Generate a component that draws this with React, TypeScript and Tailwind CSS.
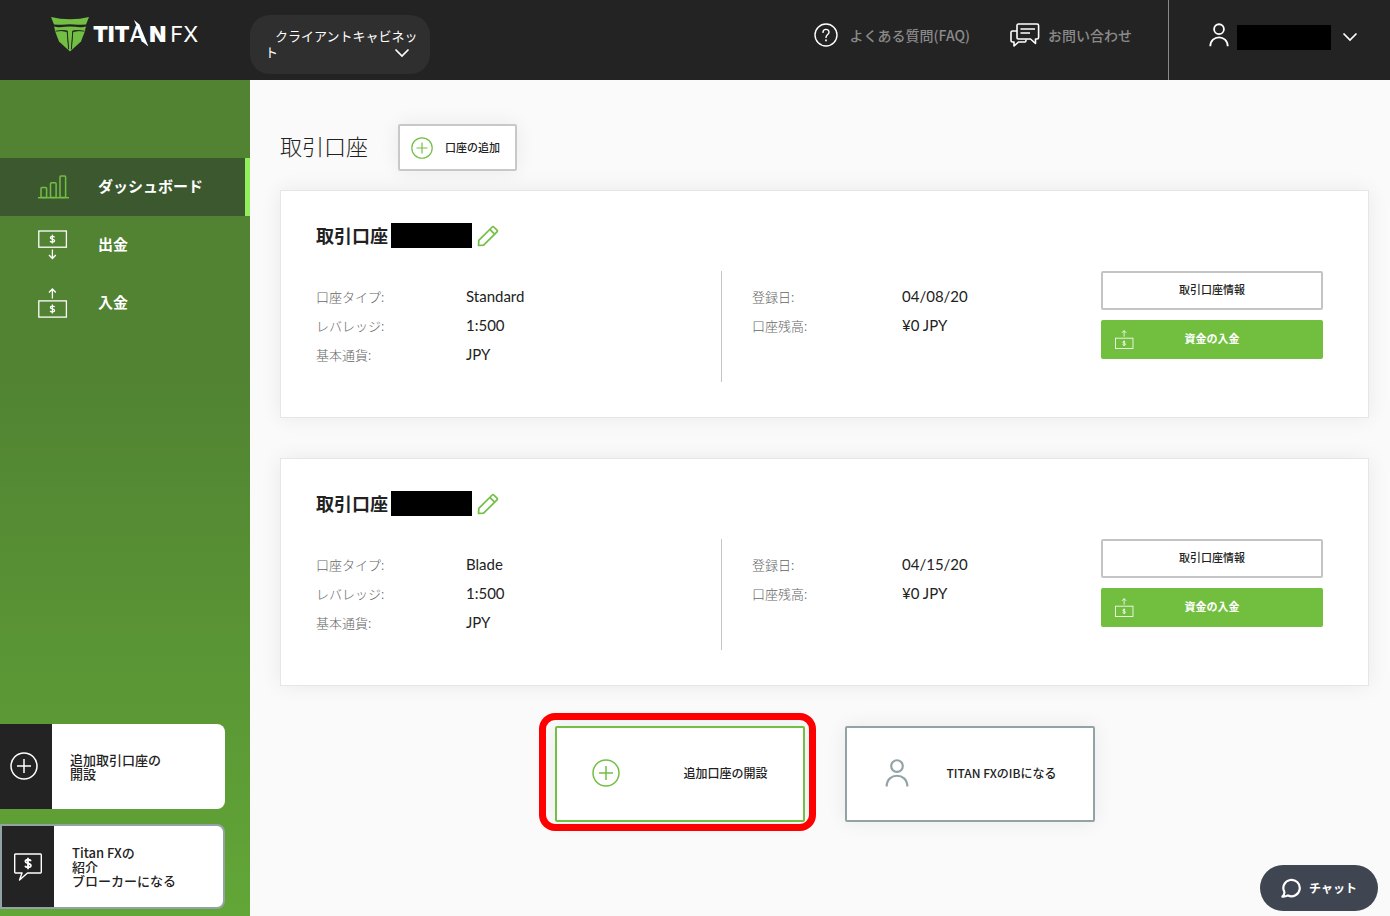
/**
 * クライアントキャビネット - ダッシュボード画面
 */

import type { ReactNode } from 'react';

interface Account {
  id: string;
  type: string;
  leverage: string;
  currency: string;
  registered: string;
  balance: string;
}

const accounts: Account[] = [
  { id: 'standard', type: 'Standard', leverage: '1:500', currency: 'JPY', registered: '04/08/20', balance: '¥0 JPY' },
  { id: 'blade', type: 'Blade', leverage: '1:500', currency: 'JPY', registered: '04/15/20', balance: '¥0 JPY' },
];

interface IconProps {
  className?: string;
}

/* ---------- アイコン ---------- */

function ShieldIcon({ className }: IconProps) {
  return (
    <svg viewBox="0 0 38 36" className={className} fill="#72bf44" aria-hidden="true">
      <path d="M0 1 Q9 3.2 19 3.2 Q29 3.2 38 1 L35 8.4 Q30 8.8 27 8.8 Q19 7.6 11 8.8 Q8 8.8 3 8.4 Z" />
      <path d="M3 10.6 Q6 11.4 9 11.2 Q19 9.8 29 11.2 Q32 11.4 35 10.6 L33.6 15.4 Q28 13.8 21.6 14.6 L20.2 34.4 L19 35.4 L17.8 34.4 L16.4 14.6 Q10 13.8 4.4 15.4 Z" />
      <path d="M3.6 14 Q10 14.6 15.8 15.8 L17.6 34.2 L8 25.4 Z" />
      <path d="M34.4 14 Q28 14.6 22.2 15.8 L20.4 34.2 L30 25.4 Z" />
      <path d="M4.4 15.2 Q10 14 15.6 15.2 M33.6 15.2 Q28 14 22.4 15.2 M16.2 15 L17.6 33 M21.8 15 L20.4 33" fill="none" stroke="#232323" strokeWidth="0.9" />
    </svg>
  );
}

function ChevronIcon({ className }: IconProps) {
  return (
    <svg viewBox="0 0 16 10" className={className} fill="none" stroke="currentColor" strokeWidth="1.7" aria-hidden="true">
      <path d="M1.5 1.5 L8 8 L14.5 1.5" />
    </svg>
  );
}

function QuestionIcon({ className }: IconProps) {
  return (
    <svg viewBox="0 0 24 24" className={className} fill="none" stroke="currentColor" strokeWidth="1.4" strokeLinecap="round" aria-hidden="true">
      <circle cx="12" cy="12" r="11" />
      <path d="M9 9.4 C9 5.4 15 5.4 15 9.2 C15 11.6 12 11.6 12 14.4" />
      <path d="M12 17.2 V17.6" strokeWidth="1.8" />
    </svg>
  );
}

function MessagesIcon({ className }: IconProps) {
  return (
    <svg viewBox="0 0 30 24" className={className} fill="none" stroke="currentColor" strokeWidth="1.6" strokeLinejoin="round" aria-hidden="true">
      <path d="M8.5 1 H27 Q28.6 1 28.6 2.6 V14.4 Q28.6 16 27 16 H25.5 V20.5 L20.5 16 H8.5 Q7 16 7 14.4 V2.6 Q7 1 8.5 1 Z" />
      <path d="M7 8 H2.5 Q1 8 1 9.5 V17.5 Q1 19 2.5 19 H4 V23 L8.5 19 H15 Q16 19 16 16.5" />
      <path d="M10.5 6 H25 M10.5 10 H20" />
    </svg>
  );
}

function UserIcon({ className }: IconProps) {
  return (
    <svg viewBox="0 0 22 26" className={className} fill="none" stroke="currentColor" strokeWidth="2" aria-hidden="true">
      <circle cx="11" cy="6.6" r="5.4" />
      <path d="M1.4 25.5 C1.4 12.2 20.6 12.2 20.6 25.5" />
    </svg>
  );
}

function BarsIcon({ className }: IconProps) {
  return (
    <svg viewBox="0 0 32 24" className={className} fill="none" stroke="currentColor" strokeWidth="1.5" aria-hidden="true">
      <path d="M0 22.7 H31" />
      <rect x="3" y="12.5" width="5.6" height="10" rx="1" />
      <rect x="12.5" y="7.8" width="5.6" height="14.8" rx="1" />
      <rect x="22" y="1" width="5.6" height="21.6" rx="1" />
    </svg>
  );
}

function DollarMark() {
  return (
    <path d="M2.2 -1.8 C1.8 -3.4 -2 -3.2 -2 -1.5 C-2 0.3 2.2 -0.4 2.2 1.6 C2.2 3.4 -1.8 3.4 -2.2 1.8 M0 -4.4 V4.4" />
  );
}

function WithdrawIcon({ className }: IconProps) {
  return (
    <svg viewBox="0 0 30 30" className={className} fill="none" stroke="currentColor" strokeWidth="1.3" aria-hidden="true">
      <rect x="0.8" y="1" width="27.6" height="16.2" />
      <g transform="translate(14.4 9.2)"><DollarMark /></g>
      <path d="M14.4 19.5 V28.5 M11 25 L14.4 28.5 L17.8 25" />
    </svg>
  );
}

function DepositIcon({ className }: IconProps) {
  return (
    <svg viewBox="0 0 30 30" className={className} fill="none" stroke="currentColor" strokeWidth="1.3" aria-hidden="true">
      <rect x="0.8" y="12.9" width="27.6" height="16.2" />
      <g transform="translate(14.4 21)"><DollarMark /></g>
      <path d="M14.4 10.5 V1 M11 4.5 L14.4 1 L17.8 4.5" />
    </svg>
  );
}

function PlusCircleIcon({ className }: IconProps) {
  return (
    <svg viewBox="0 0 28 28" className={className} fill="none" stroke="currentColor" strokeWidth="1.5" aria-hidden="true">
      <circle cx="14" cy="14" r="13" />
      <path d="M14 7 V21 M7 14 H21" />
    </svg>
  );
}

function BrokerIcon({ className }: IconProps) {
  return (
    <svg viewBox="0 0 28 28" className={className} fill="none" stroke="currentColor" strokeWidth="1.4" strokeLinejoin="round" aria-hidden="true">
      <path d="M1.5 1 H26.5 Q27.3 1 27.3 2 V19 Q27.3 20 26.5 20 H13.5 L5.5 27 L8 20 H1.5 Q0.7 20 0.7 19 V2 Q0.7 1 1.5 1 Z" />
      <g transform="translate(14 10.5) scale(1.3)"><DollarMark /></g>
    </svg>
  );
}

function PencilIcon({ className }: IconProps) {
  return (
    <svg viewBox="0 0 22 22" className={className} fill="none" stroke="currentColor" strokeWidth="1.7" strokeLinejoin="round" aria-hidden="true">
      <path d="M1.5 20.5 L1.8 15.4 L15.2 2 Q16 1.2 16.8 2 L20 5.2 Q20.8 6 20 6.8 L6.6 20.2 Z" />
      <path d="M12.8 4.4 L17.6 9.2" />
    </svg>
  );
}

function ChatIcon({ className }: IconProps) {
  return (
    <svg viewBox="0 0 20 20" className={className} fill="none" stroke="currentColor" strokeWidth="2.2" strokeLinejoin="round" aria-hidden="true">
      <path d="M3.4 14 A8.2 8.2 0 1 1 7 17.4 Q4.5 18.8 1.4 18.6 Q3.6 16.6 3.4 14 Z" />
    </svg>
  );
}

/* ---------- ヘッダー ---------- */

function Logo() {
  return (
    <a href="#home" className="flex items-center gap-1 text-white" aria-label="Titan FX">
      <ShieldIcon className="h-9 w-[38px]" />
      <span className="flex font-['Inter',sans-serif] text-[22px] leading-8 font-black">
        <span>TIT</span>
        <span className="relative font-medium">
          A
          {/* Aの右足に重なる刃 */}
          <svg viewBox="0 0 16 27" className="absolute top-0.5 left-1 h-[27px] w-4" fill="currentColor" aria-hidden="true">
            <path d="M0 0 L5.4 4.6 L14.4 26.6 L9.4 22.4 Z" />
          </svg>
        </span>
        <span className="ml-1">N</span>
        <span className="ml-1 font-normal">FX</span>
      </span>
    </a>
  );
}

function Header() {
  return (
    <header className="flex h-20 bg-[#232323] text-white">
      <div className="w-[250px] shrink-0 pt-4 pl-[51px]">
        <Logo />
      </div>
      <div className="pt-[15px]">
        <button
          type="button"
          className="h-[59px] w-[180px] rounded-[20px] bg-[#2f2f2f] pr-2 pb-0.5 pl-[15px] text-left indent-[10px] text-[13px] leading-4"
        >
          クライアントキャビネット
          <ChevronIcon className="float-right mt-1 mr-3 h-2.5 w-4" />
        </button>
      </div>
      <nav className="ml-auto flex items-center gap-10 pr-9 pb-2.5 text-sm font-medium text-[#8a8a8a]">
        <a href="#faq" className="flex items-center gap-3">
          <QuestionIcon className="size-6 text-white" />
          よくある質問(FAQ)
        </a>
        <a href="#contact" className="flex items-center gap-2">
          <MessagesIcon className="h-6 w-[30px] text-white" />
          お問い合わせ
        </a>
      </nav>
      <button
        type="button"
        aria-label="アカウントメニュー"
        className="flex w-[222px] items-center border-l border-[#8a8a8a] pb-1.5 pl-10"
      >
        <UserIcon className="mr-2 mb-1 h-6 w-5" />
        <span className="h-[25px] w-[94px] bg-black" />
        <ChevronIcon className="ml-[11px] h-2.5 w-4" />
      </button>
    </header>
  );
}

/* ---------- サイドバー ---------- */

interface NavItemProps {
  icon: ReactNode;
  label: string;
  active?: boolean;
}

function NavItem({ icon, label, active }: NavItemProps) {
  return (
    <a
      href="#nav"
      className={`flex h-[58px] items-center border-r-[5px] pl-[38px] text-[15px] font-bold text-white ${
        active ? 'border-[#92ee5c] bg-[#3c582f]' : 'border-transparent'
      }`}
    >
      <span className="w-[60px]">{icon}</span>
      <span className="pb-0.5">{label}</span>
    </a>
  );
}

function Sidebar() {
  return (
    <aside className="flex w-[250px] shrink-0 flex-col bg-linear-to-b from-[#518332] from-35% to-[#62a637] pt-[78px] pb-[7px]">
      <nav>
        <NavItem active label="ダッシュボード" icon={<BarsIcon className="h-6 w-8 text-[#72bf44]" />} />
        <NavItem label="出金" icon={<WithdrawIcon className="size-[30px]" />} />
        <NavItem label="入金" icon={<DepositIcon className="size-[30px]" />} />
      </nav>
      <div className="mt-auto flex w-[225px] flex-col gap-[15px] pt-10 text-[13px] leading-[14px] font-medium text-[#222]">
        <a href="#open" className="flex h-[85px] overflow-hidden rounded-r-lg bg-white">
          <span className="flex w-[52px] items-center bg-[#232323] pb-0.5 pl-2.5 text-white">
            <PlusCircleIcon className="size-7" />
          </span>
          <span className="self-center pl-[18px]">
            追加取引口座の
            <br />
            開設
          </span>
        </a>
        <a href="#broker" className="flex h-[85px] overflow-hidden rounded-r-lg border-2 border-[#93a3a5] bg-white">
          <span className="flex w-[52px] items-center bg-[#232323] pl-3 text-white">
            <BrokerIcon className="size-7" />
          </span>
          <span className="self-center pl-[18px]">
            Titan FXの
            <br />
            紹介
            <br />
            ブローカーになる
          </span>
        </a>
      </div>
    </aside>
  );
}

/* ---------- 口座カード ---------- */

function Field({ label, value }: { label: string; value: string }) {
  return (
    <div className="flex">
      <dt className="w-[150px] text-[13px] font-light text-[#666]">{label}</dt>
      <dd className="font-['Lato','Noto_Sans_CJK_JP',sans-serif] text-[15px] leading-[29px]">{value}</dd>
    </div>
  );
}

function AccountCard({ account }: { account: Account }) {
  return (
    <section className="border border-[#e6e6e6] bg-white pt-8 pr-[45px] pb-[35px] pl-[35px] shadow-[0_0_20px_rgba(0,0,0,0.07)]">
      <div className="flex h-[25px] items-center">
        <h2 className="pb-0.5 text-lg font-bold">取引口座</h2>
        <span className="ml-[3px] h-[25px] w-[81px] bg-black" />
        <button type="button" aria-label="名前を編集" className="ml-[5px] text-[#72bf44]">
          <PencilIcon className="size-[22px]" />
        </button>
      </div>
      <div className="mt-[23px] grid grid-cols-[405fr_380fr_222px] leading-[29px]">
        <dl className="pt-[11px] pb-[13px]">
          <Field label="口座タイプ:" value={account.type} />
          <Field label="レバレッジ:" value={account.leverage} />
          <Field label="基本通貨:" value={account.currency} />
        </dl>
        <dl className="border-l border-[#c4c4c4] pt-[11px] pl-[30px]">
          <Field label="登録日:" value={account.registered} />
          <Field label="口座残高:" value={account.balance} />
        </dl>
        <div className="flex flex-col gap-2.5 text-[11px]">
          <button type="button" className="h-[39px] rounded-xs border-2 border-[#c4c4c4] bg-white pb-0.5 font-medium">
            取引口座情報
          </button>
          <button
            type="button"
            className="grid h-[39px] grid-cols-[1fr_auto_1fr] items-center rounded-xs bg-[#72bf40] px-3.5 font-bold text-white"
          >
            <DepositIcon className="size-[19px]" />
            <span className="pb-0.5">資金の入金</span>
          </button>
        </div>
      </div>
    </section>
  );
}

export default function App() {
  return (
    <div className="flex min-h-screen flex-col bg-[#fafafa] font-['Noto_Sans_CJK_JP',sans-serif] text-[#222]">
      <Header />
      <div className="flex flex-1">
        <Sidebar />
        <main className="min-w-0 flex-1 pt-11 pr-[21px] pb-10 pl-[30px]">
          <div className="flex items-center gap-[30px]">
            <h1 className="pb-1 text-[22px] font-light">取引口座</h1>
            <button
              type="button"
              className="flex h-[47px] w-[119px] items-center gap-3 rounded-xs border-2 border-[#c8c8c8] bg-white pl-[11px] text-[11px] font-medium shadow-[0_0_20px_rgba(0,0,0,0.07)]"
            >
              <PlusCircleIcon className="size-[22px] text-[#72bf44]" />
              口座の追加
            </button>
          </div>

          <div className="mt-[19px] flex flex-col gap-10">
            {accounts.map(account => (
              <AccountCard key={account.id} account={account} />
            ))}
          </div>

          <div className="mt-10 flex justify-center gap-10 text-xs font-medium">
            <div className="relative">
              <button
                type="button"
                className="flex h-24 w-[250px] items-center justify-between rounded-xs border-2 border-[#72bf44] bg-white px-[35px] pb-0.5 shadow-[0_0_20px_rgba(0,0,0,0.07)]"
              >
                <PlusCircleIcon className="size-7 text-[#72bf44]" />
                追加口座の開設
              </button>
              {/* 強調枠 */}
              <span className="pointer-events-none absolute -top-[13px] -right-[11px] -bottom-[9px] -left-4 rounded-2xl border-[7px] border-[#f00]" />
            </div>
            <button
              type="button"
              className="flex h-24 w-[250px] items-center justify-between rounded-xs border-2 border-[#93a3a5] bg-white px-9 pb-0.5 shadow-[0_0_20px_rgba(0,0,0,0.07)]"
            >
              <UserIcon className="ml-0.5 h-7 w-6 text-[#93a3a5]" />
              TITAN FXのIBになる
            </button>
          </div>
        </main>
      </div>

      <button
        type="button"
        className="fixed right-3 bottom-[5px] flex h-[46px] w-[118px] items-center justify-center gap-2 rounded-full bg-[#404552] text-xs font-bold text-white"
      >
        <ChatIcon className="size-5" />
        チャット
      </button>
    </div>
  );
}
